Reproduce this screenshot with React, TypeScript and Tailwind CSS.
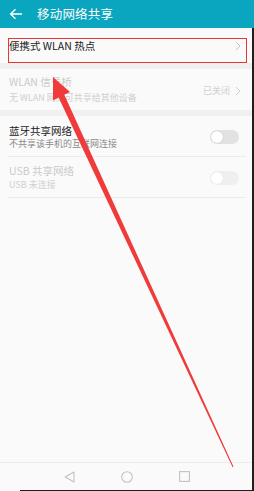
import React from 'react'

const font = { fontFamily: '"Noto Sans CJK SC", "Noto Sans", sans-serif' }

const Toggle: React.FC<{ dim?: boolean }> = ({ dim }) => (
  <div
    className={`w-[29px] h-[14px] rounded-full flex items-center px-[1px] ${
      dim ? 'bg-[#efefef]' : 'bg-[#e2e2e2]'
    }`}
  >
    <div className={`w-[12px] h-[12px] rounded-full bg-white ${dim ? 'shadow-[0_0_1px_rgba(0,0,0,0.1)]' : 'shadow-[0_0_1px_rgba(0,0,0,0.25)]'}`} />
  </div>
)

const Chevron: React.FC<{ color: string }> = ({ color }) => (
  <svg width="6" height="10" viewBox="0 0 6 10" fill="none">
    <path d="M1 1l4 4-4 4" stroke={color} strokeWidth="1" />
  </svg>
)

export default function App() {
  return (
    <div className="relative w-[254px] h-[491px] overflow-hidden bg-[#fafafa] flex flex-col" style={font}>
      {/* header */}
      <div className="h-[28px] bg-[#0aa5be] flex items-center shrink-0">
        <svg className="ml-[9px]" width="14" height="12" viewBox="0 0 14 12" fill="none">
          <path d="M13 6H2M6.5 1.2L1.6 6l4.9 4.8" stroke="white" strokeWidth="1.4" />
        </svg>
        <span className="ml-[14px] text-[12.5px] leading-none text-white tracking-[0.2px]">移动网络共享</span>
      </div>

      <div className="flex-1 flex flex-col">
        {/* portable hotspot */}
        <div className="h-[35px] flex items-center justify-between pl-[9px] pr-[13px]">
          <span className="text-[10.5px] text-[#1a1a1a]">便携式 WLAN 热点</span>
          <Chevron color="#c4c4c4" />
        </div>
        <div className="h-[6px] bg-[#f0f0f0]" />

        {/* wlan bridge */}
        <div className="flex items-center justify-between pl-[9px] pr-[13px] pt-[6px] pb-[6px]">
          <div className="flex flex-col">
            <span className="text-[10.5px] leading-[14px] text-[#cbcbcb]">WLAN 信号桥</span>
            <span className="mt-[3px] text-[9px] leading-[12px] text-[#d0d0d0]">无 WLAN 网络可共享给其他设备</span>
          </div>
          <div className="flex items-center gap-[5px] mt-[2px]">
            <span className="text-[9px] text-[#d0d0d0]">已关闭</span>
            <Chevron color="#d0d0d0" />
          </div>
        </div>
        <div className="h-[6px] bg-[#f0f0f0]" />

        {/* bluetooth */}
        <div className="mx-[8px] flex items-center justify-between pl-[1px] pr-[7px] pt-[8px] pb-[6px] border-b border-[#ececec]">
          <div className="flex flex-col">
            <span className="text-[10.5px] leading-[13px] text-[#1a1a1a]">蓝牙共享网络</span>
            <span className="mt-[1px] text-[9px] leading-[12px] text-[#8a8a8a]">不共享该手机的互联网连接</span>
          </div>
          <Toggle />
        </div>

        {/* usb */}
        <div className="mx-[8px] flex items-center justify-between pl-[1px] pr-[7px] pt-[7px] pb-[6px] border-b border-[#ececec]">
          <div className="flex flex-col">
            <span className="text-[10.5px] leading-[14px] text-[#cbcbcb]">USB 共享网络</span>
            <span className="mt-[1px] text-[9px] leading-[12px] text-[#d0d0d0]">USB 未连接</span>
          </div>
          <Toggle dim />
        </div>
      </div>

      {/* nav bar */}
      <div className="h-[29px] shrink-0 border-t border-[#ededed] flex items-center justify-center gap-[46px] pb-[1px]">
        <svg width="11" height="12" viewBox="0 0 11 12" fill="none">
          <path d="M10 1L1.2 6 10 11z" stroke="#c2c2c2" strokeWidth="1.1" strokeLinejoin="round" />
        </svg>
        <svg width="12" height="12" viewBox="0 0 12 12" fill="none">
          <circle cx="6" cy="6" r="5.3" stroke="#c2c2c2" strokeWidth="1.1" />
        </svg>
        <svg width="11" height="11" viewBox="0 0 11 11" fill="none">
          <rect x="0.6" y="0.6" width="9.8" height="9.8" stroke="#c2c2c2" strokeWidth="1.1" />
        </svg>
      </div>

      {/* annotation: red box + arrow */}
      <div className="absolute left-[8px] top-[38px] w-[239px] h-[25px] border-[1.5px] border-[#ec3434]" />
      <svg className="absolute inset-0 pointer-events-none" width="254" height="491" viewBox="0 0 254 491">
        <polygon
          points="53,77 70,92 64.3,94.8 233.5,466.8 232.6,467.2 58.6,97.6 53,100.5"
          fill="#f03b3b"
        />
      </svg>

      {/* screenshot edges */}
      <div className="absolute top-[28px] bottom-0 right-0 w-[2px] bg-[#1e1e1e]" />
      <div className="absolute bottom-0 left-[20px] right-0 h-px bg-[#1e1e1e]" />
    </div>
  )
}
